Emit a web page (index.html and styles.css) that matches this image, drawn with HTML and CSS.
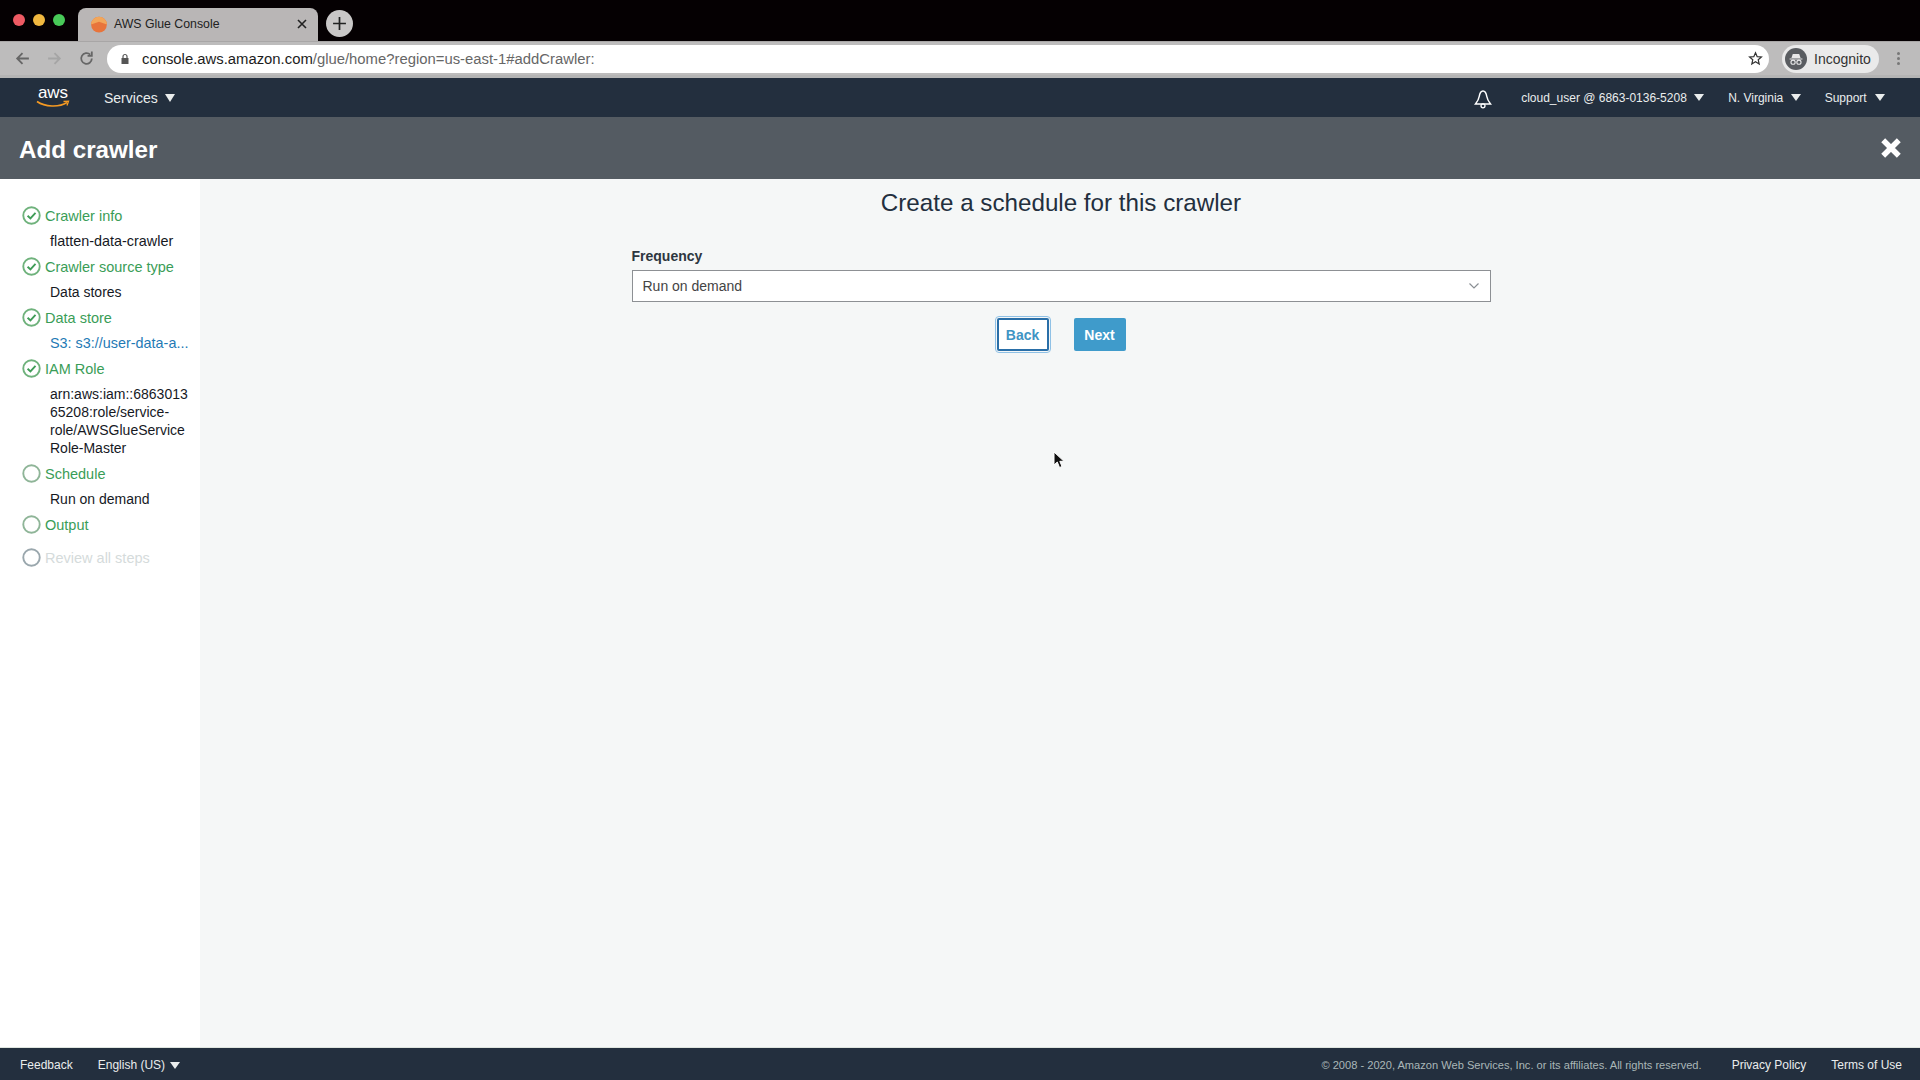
FILE: index.html
```html
<!DOCTYPE html>
<html lang="en">
<head>
    <meta charset="UTF-8">
    <meta name="viewport" content="width=device-width, initial-scale=1.0">
    <title>AWS Glue Console</title>
    <link rel="stylesheet" href="styles.css">
</head>
<body>
    <div class="tabstrip">
        <div class="lights">
            <span class="light light-red"></span>
            <span class="light light-yellow"></span>
            <span class="light light-green"></span>
        </div>
        <div class="tab">
            <svg class="favicon" viewBox="0 0 16 16"><circle cx="8" cy="8.500" r="7" fill="#e8743b"/><path d="M8 1.500A7 7 0 0 1 15 8.500L8 6 1 8.500A7 7 0 0 1 8 1.500Z" fill="#f2a65a"/></svg>
            <span class="tab-title">AWS Glue Console</span>
            <svg class="tab-close" viewBox="0 0 10 10"><path d="M1 1 9 9M9 1 1 9" stroke="#222" stroke-width="1.600"/></svg>
        </div>
        <div class="new-tab">
            <svg viewBox="0 0 14 14"><path d="M7 1V13M1 7H13" stroke="#222" stroke-width="1.600"/></svg>
        </div>
    </div>

    <div class="toolbar">
        <svg class="tool-icon" viewBox="0 0 16 16"><path d="M14 8H3M8 3 3 8 8 13" fill="none" stroke="#666" stroke-width="1.700"/></svg>
        <svg class="tool-icon" viewBox="0 0 16 16"><path d="M2 8H13M8 3 13 8 8 13" fill="none" stroke="#a5a5a5" stroke-width="1.700"/></svg>
        <svg class="tool-icon" viewBox="0 0 16 16"><path d="M13 8A5 5 0 1 1 11.500 4.400M13 1.500V5.500H9" fill="none" stroke="#666" stroke-width="1.700"/></svg>
        <div class="omnibox">
            <svg class="lock" viewBox="0 0 10 12"><path d="M3 5V3.500A2 2 0 0 1 7 3.500V5" fill="none" stroke="#555" stroke-width="1.200"/><rect x="1.500" y="5" width="7" height="6" fill="#555"/></svg>
            <span class="url"><span class="url-host">console.aws.amazon.com</span>/glue/home?region=us-east-1#addCrawler:</span>
            <svg class="star" viewBox="0 0 16 16"><path d="M8 1.800 9.800 6 14.300 6.400 10.900 9.300 11.900 13.800 8 11.400 4.100 13.800 5.100 9.300 1.700 6.400 6.200 6Z" fill="none" stroke="#333" stroke-width="1.300"/></svg>
        </div>
        <div class="profile">
            <svg class="incognito" viewBox="0 0 24 24"><circle cx="12" cy="12" r="12" fill="#5a5d61"/><path d="M7 11 8.500 6.500H15.500L17 11ZM5 11.500H19V12.500H5Z" fill="#e8e8e8"/><circle cx="8.800" cy="15.500" r="2.300" fill="none" stroke="#e8e8e8" stroke-width="1.200"/><circle cx="15.200" cy="15.500" r="2.300" fill="none" stroke="#e8e8e8" stroke-width="1.200"/></svg>
            <span>Incognito</span>
        </div>
        <div class="kebab"><i></i><i></i><i></i></div>
    </div>

    <nav class="aws-nav">
        <div class="aws-logo">
            <span class="aws-word">aws</span>
            <svg class="aws-smile" viewBox="0 0 34 8"><path d="M1 1.500C9 7 23 7.500 31 2.500" fill="none" stroke="#f59a23" stroke-width="1.600"/><path d="M27.500 1.500 32.500 1.200 31 5.500" fill="none" stroke="#f59a23" stroke-width="1.300"/></svg>
        </div>
        <span class="nav-item nav-services">Services <i class="caret caret-lg"></i></span>
        <svg class="bell" viewBox="0 0 18 20"><path d="M9 2C6.500 2 5.700 4.500 5.200 7.500 4.700 10.500 3.500 12.500 1.500 15H16.500C14.500 12.500 13.300 10.500 12.800 7.500 12.300 4.500 11.500 2 9 2Z" fill="none" stroke="#fff" stroke-width="1.500"/><circle cx="9" cy="16.800" r="2" fill="none" stroke="#fff" stroke-width="1.300"/></svg>
        <span class="nav-item nav-small nav-account">cloud_user @ 6863-0136-5208 <i class="caret"></i></span>
        <span class="nav-item nav-small nav-region">N. Virginia <i class="caret"></i></span>
        <span class="nav-item nav-small nav-support">Support <i class="caret"></i></span>
    </nav>

    <header class="wizard-head">
        <h1>Add crawler</h1>
        <svg class="wizard-close" viewBox="0 0 20 20"><path d="M3.500 3.500 16.500 16.500M16.500 3.500 3.500 16.500" stroke="#fff" stroke-width="4.600"/></svg>
    </header>

    <div class="wizard">
        <aside class="steps">
            <div class="step">
                <svg class="step-icon" viewBox="0 0 18 18"><circle cx="9" cy="9" r="7.800" fill="none" stroke="#6fb27c" stroke-width="1.800"/><path d="M5.300 9.200 8 11.800 12.800 6.600" fill="none" stroke="#3f9c57" stroke-width="1.800"/></svg>
                Crawler info
            </div>
            <div class="step-value step-value-wide">flatten-data-crawler</div>
            <div class="step">
                <svg class="step-icon" viewBox="0 0 18 18"><circle cx="9" cy="9" r="7.800" fill="none" stroke="#6fb27c" stroke-width="1.800"/><path d="M5.300 9.200 8 11.800 12.800 6.600" fill="none" stroke="#3f9c57" stroke-width="1.800"/></svg>
                Crawler source type
            </div>
            <div class="step-value">Data stores</div>
            <div class="step">
                <svg class="step-icon" viewBox="0 0 18 18"><circle cx="9" cy="9" r="7.800" fill="none" stroke="#6fb27c" stroke-width="1.800"/><path d="M5.300 9.200 8 11.800 12.800 6.600" fill="none" stroke="#3f9c57" stroke-width="1.800"/></svg>
                Data store
            </div>
            <div class="step-value step-link">S3: s3://user-data-a...</div>
            <div class="step">
                <svg class="step-icon" viewBox="0 0 18 18"><circle cx="9" cy="9" r="7.800" fill="none" stroke="#6fb27c" stroke-width="1.800"/><path d="M5.300 9.200 8 11.800 12.800 6.600" fill="none" stroke="#3f9c57" stroke-width="1.800"/></svg>
                IAM Role
            </div>
            <div class="step-value">arn:aws:iam::6863013<br>65208:role/service-<br>role/AWSGlueService<br>Role-Master</div>
            <div class="step">
                <svg class="step-icon" viewBox="0 0 18 18"><circle cx="9" cy="9" r="7.800" fill="none" stroke="#8fb598" stroke-width="1.800"/></svg>
                Schedule
            </div>
            <div class="step-value">Run on demand</div>
            <div class="step">
                <svg class="step-icon" viewBox="0 0 18 18"><circle cx="9" cy="9" r="7.800" fill="none" stroke="#8fb598" stroke-width="1.800"/></svg>
                Output
            </div>
            <div class="step step-disabled">
                <svg class="step-icon" viewBox="0 0 18 18"><circle cx="9" cy="9" r="7.800" fill="none" stroke="#9aa7ad" stroke-width="1.800"/></svg>
                Review all steps
            </div>
        </aside>

        <main class="panel">
            <h2>Create a schedule for this crawler</h2>
            <div class="form-block">
                <label class="field-label">Frequency</label>
                <div class="select">
                    <span>Run on demand</span>
                    <svg class="select-arrow" viewBox="0 0 12 8"><path d="M1.500 1.500 6 6 10.500 1.500" fill="none" stroke="#8a8f94" stroke-width="1.200"/></svg>
                </div>
                <div class="actions">
                    <button class="btn btn-back">Back</button>
                    <button class="btn btn-next">Next</button>
                </div>
            </div>
        </main>
    </div>

    <footer class="page-foot">
        <span class="foot-link">Feedback</span>
        <span class="foot-link foot-lang">English (US) <i class="caret"></i></span>
        <span class="foot-copy">© 2008 - 2020, Amazon Web Services, Inc. or its affiliates. All rights reserved.</span>
        <span class="foot-link foot-privacy">Privacy Policy</span>
        <span class="foot-link foot-terms">Terms of Use</span>
    </footer>

    <svg class="cursor" viewBox="0 0 12 18"><path d="M1 1V14L4.300 11 6.500 16.500 9 15.500 6.800 10.300H11Z" fill="#111" stroke="#fff" stroke-width="1"/></svg>
</body>
</html>
```

FILE: styles.css
```css
* {
    box-sizing: border-box;
    padding: 0;
    margin: 0;
}

html, body {
    height: 100%;
}

body {
    display: flex;
    flex-direction: column;
    width: 1920px;
    height: 1080px;
    overflow: hidden;
    position: relative;
    font-family: "Liberation Sans", Arial, sans-serif;
    font-size: 14px;
    color: #16191f;
    background-color: #f5f7f7;
}

/* browser chrome */
.tabstrip {
    height: 41px;
    flex: none;
    display: flex;
    align-items: flex-end;
    background-color: #050002;
}

.lights {
    width: 78px;
    height: 41px;
    flex: none;
    display: flex;
    gap: 8px;
    padding: 14px 0 0 13px;
}

.light {
    width: 12px;
    height: 12px;
    border-radius: 50%;
}

.light-red { background-color: #ee5a63; }
.light-yellow { background-color: #f0b73f; }
.light-green { background-color: #48c958; }

.tab {
    width: 240px;
    height: 33px;
    flex: none;
    display: flex;
    align-items: center;
    padding: 0 11px 2px 12px;
    background-color: #b9b6b6;
    border-radius: 8px 8px 0 0;
    font-size: 12.300px;
    color: #222;
}

.favicon {
    width: 18px;
    height: 18px;
    flex: none;
}

.tab-title {
    flex: 1;
    margin-left: 6px;
}

.tab-close {
    width: 10px;
    height: 10px;
}

.new-tab {
    width: 27px;
    height: 27px;
    margin: 0 0 4px 8px;
    padding: 6px;
    border-radius: 50%;
    background-color: #c9c7c7;
}

.new-tab svg {
    display: block;
}

.toolbar {
    height: 37px;
    flex: none;
    display: flex;
    align-items: center;
    padding-left: 14px;
    background-color: #bdbcbc;
    border-top: 1px solid #a8a6a6;
    border-bottom: 3px solid #b4b4b4;
}

.tool-icon {
    width: 17px;
    height: 17px;
    flex: none;
    margin-right: 15px;
}

.tool-icon:nth-of-type(3) {
    margin-right: 12px;
}

.omnibox {
    width: 1662px;
    height: 28px;
    flex: none;
    display: flex;
    align-items: center;
    padding: 0 6px 0 13px;
    background-color: #fff;
    border-radius: 14px;
}

.lock {
    width: 10px;
    height: 12px;
    flex: none;
}

.url {
    flex: 1;
    margin-left: 12px;
    font-size: 14.850px;
    color: #666;
}

.url-host {
    color: #1c1c1c;
}

.star {
    width: 15px;
    height: 15px;
}

.profile {
    width: 97px;
    height: 28px;
    flex: none;
    margin-left: 13px;
    display: flex;
    align-items: center;
    gap: 7px;
    padding-left: 3px;
    background-color: #eaeaea;
    border-radius: 14px;
    font-size: 14px;
    color: #333;
}

.incognito {
    width: 22px;
    height: 22px;
}

.kebab {
    margin-left: 18px;
    display: flex;
    flex-direction: column;
    gap: 2px;
}

.kebab i {
    width: 3px;
    height: 3px;
    border-radius: 50%;
    background-color: #777;
}

/* aws console nav */
.aws-nav {
    height: 39px;
    flex: none;
    display: flex;
    align-items: center;
    color: #eaeded;
    background-color: #232f3e;
}

.aws-logo {
    width: 34px;
    height: 28px;
    flex: none;
    margin-left: 36px;
    position: relative;
    text-align: center;
}

.aws-word {
    display: block;
    font-size: 17px;
    line-height: 17px;
    color: #fff;
}

.aws-smile {
    position: absolute;
    left: 0;
    top: 16px;
    width: 34px;
    height: 8px;
}

.nav-item {
    display: flex;
    align-items: center;
    gap: 4px;
    white-space: pre;
}

.nav-services {
    margin-left: 34px;
}

.nav-small {
    font-size: 12px;
}

.bell {
    width: 18px;
    height: 20px;
    margin-left: auto;
    margin-top: 2px;
}

.nav-account {
    margin-left: 29px;
}

.nav-region {
    margin-left: 24px;
}

.nav-support {
    margin-left: 24px;
    margin-right: 35px;
    gap: 5px;
}

.caret {
    display: inline-block;
    width: 0;
    height: 0;
    border-left: 5px solid transparent;
    border-right: 5px solid transparent;
    border-top: 7px solid #eaeded;
}

.caret-lg {
    border-top-width: 8px;
    margin-left: -1px;
}

.wizard-head {
    height: 62px;
    flex: none;
    display: flex;
    align-items: center;
    justify-content: space-between;
    padding: 4px 17px 0 19px;
    background-color: #545b62;
    color: #fff;
}

.wizard-head h1 {
    font-size: 24.200px;
    font-weight: 700;
}

.wizard-close {
    width: 24px;
    height: 24px;
    margin-bottom: 5px;
}

/* wizard body */
.wizard {
    flex: 1;
    display: flex;
    min-height: 0;
}

.steps {
    width: 200px;
    flex: none;
    padding: 27.500px 0 0 22.500px;
    background-color: #fff;
    line-height: 18px;
}

.step {
    display: flex;
    align-items: center;
    gap: 4.500px;
    height: 18px;
    margin-bottom: 7.500px;
    margin-left: -1px;
    font-size: 14.500px;
    color: #3a9d57;
}

.step-icon {
    width: 19px;
    height: 19px;
    flex: none;
}

.step-value {
    margin-bottom: 7.500px;
    margin-left: 27.500px;
    color: #16191f;
}

.step-value-wide {
    font-size: 14.400px;
}

.step-link {
    font-size: 14.400px;
    color: #1f7ab5;
}

.step-disabled {
    margin-top: 15px;
    color: #d5dbdb;
}

.panel {
    flex: 1;
    padding: 10px 0 0 2px;
}

.panel h2 {
    font-size: 24.200px;
    font-weight: 400;
    line-height: 28px;
    text-align: center;
    color: #232f3e;
}

.form-block {
    width: 859px;
    margin: 31px auto 0;
}

.field-label {
    display: block;
    font-weight: 700;
    line-height: 16px;
    margin-bottom: 6px;
    color: #2d3640;
}

.select {
    height: 32px;
    display: flex;
    align-items: center;
    justify-content: space-between;
    padding: 0 10px 0 10px;
    background-color: #fff;
    border: 1px solid #8d9094;
    color: #444;
}

.select-arrow {
    width: 12px;
    height: 8px;
}

.actions {
    display: flex;
    justify-content: center;
    gap: 25px;
    margin-top: 16px;
}

.btn {
    width: 52px;
    height: 33px;
    font-family: inherit;
    font-size: 14px;
    font-weight: 700;
    border-radius: 2px;
}

.btn-back {
    color: #3f94c4;
    background-color: #fff;
    border: 2px solid #2a6fa8;
    outline: 1px solid #8fc1e6;
    outline-offset: 1px;
}

.btn-next {
    color: #fff;
    background-color: #3f9bcb;
    border: none;
}

/* footer */
.page-foot {
    height: 33px;
    flex: none;
    display: flex;
    align-items: center;
    padding: 2px 18px 0 20px;
    border-top: 1px solid #dfe5df;
    background-color: #232f3e;
    color: #eaeded;
    font-size: 12px;
}

.foot-link {
    display: flex;
    align-items: center;
    white-space: pre;
}

.foot-lang {
    margin-left: 25px;
    gap: 2px;
}

.foot-copy {
    margin-left: auto;
    font-size: 11.100px;
    color: #aab7b8;
}

.foot-privacy {
    margin-left: 30px;
}

.foot-terms {
    margin-left: 25px;
}

/* pointer captured in the recording */
.cursor {
    position: absolute;
    left: 1053px;
    top: 451px;
    width: 12px;
    height: 18px;
}
```
